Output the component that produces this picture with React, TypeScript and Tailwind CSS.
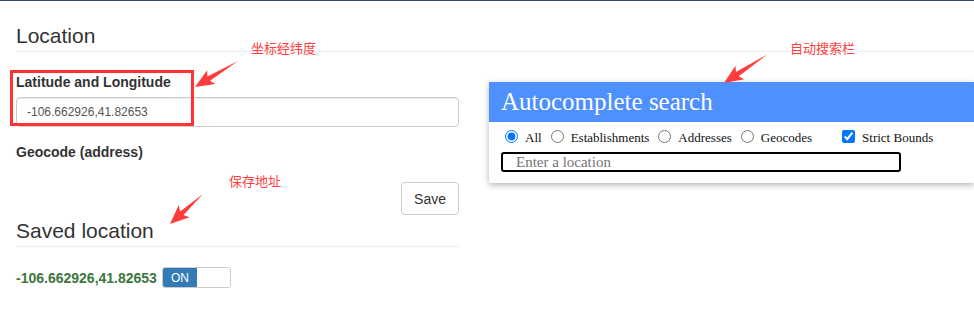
import React from 'react';

const arrowPoints = (tx: number, ty: number, px: number, py: number) => {
  const dx = px - tx;
  const dy = py - ty;
  const len = Math.hypot(dx, dy);
  const ux = dx / len;
  const uy = dy / len;
  const nx = -uy;
  const ny = ux;
  const pt = (a: number, w: number) => `${tx + ux * a + nx * w},${ty + uy * a + ny * w}`;
  const h = len - 16;
  return [pt(0, 0), pt(h, 2.5), pt(h - 3, 8), pt(len, 0), pt(h - 3, -8), pt(h, -2.5)].join(' ');
};

function Annotations() {
  return (
    <>
      <div className="pointer-events-none absolute left-[10px] top-[70px] h-[56px] w-[184px] border-[3px] border-[#ff3333]" />
      <svg className="pointer-events-none absolute left-0 top-0" width={974} height={333}>
        <polygon points={arrowPoints(238, 61, 195, 87)} fill="#ff3b3b" />
        <polygon points={arrowPoints(203, 194, 170, 224)} fill="#ff3b3b" />
        <polygon points={arrowPoints(768, 54, 724, 83)} fill="#ff3b3b" />
      </svg>
      <span className="absolute left-[251px] top-[41px] font-['Noto_Sans_CJK_SC',sans-serif] text-[13px] leading-[13px] text-[#ff4040]">
        坐标经纬度
      </span>
      <span className="absolute left-[229px] top-[174px] font-['Noto_Sans_CJK_SC',sans-serif] text-[13px] leading-[13px] text-[#ff4040]">
        保存地址
      </span>
      <span className="absolute left-[790px] top-[41px] font-['Noto_Sans_CJK_SC',sans-serif] text-[13px] leading-[13px] text-[#ff4040]">
        自动搜索栏
      </span>
    </>
  );
}

function LocationForm() {
  return (
    <div className="w-[443px] shrink-0 pt-[20px]">
      <label className="mb-[5px] block text-sm font-bold leading-5 text-[#333]">Latitude and Longitude</label>
      <input
        readOnly
        defaultValue="-106.662926,41.82653"
        className="block h-[30px] w-full rounded-[4px] border border-[#ccc] px-[10px] text-xs text-[#555] shadow-[inset_0_1px_1px_rgba(0,0,0,0.075)] outline-none"
      />
      <label className="mt-[15px] block text-sm font-bold leading-5 text-[#333]">Geocode (address)</label>
      <div className="mt-[20px] flex justify-end">
        <button className="h-[33px] rounded-[4px] border border-[#ccc] bg-white px-3 text-sm text-[#333]">Save</button>
      </div>
      <h3 className="mt-[4px] border-b border-[#eee] pb-[4px] text-[21px] leading-[23px] text-[#333]">Saved location</h3>
      <div className="mt-[20px] flex items-center gap-[5px]">
        <span className="text-sm font-bold text-[#3c763d]">-106.662926,41.82653</span>
        <div className="flex h-[21px] w-[69px] overflow-hidden rounded-[3px] border border-[#ccc]">
          <span className="flex w-[34px] items-center justify-center bg-[#337ab7] text-xs text-white">ON</span>
          <span className="flex-1 bg-white" />
        </div>
      </div>
    </div>
  );
}

function AutocompleteCard() {
  const radios = ['All', 'Establishments', 'Addresses', 'Geocodes'];
  return (
    <div className="rounded-l-[2px] bg-white pb-[11px] font-['Liberation_Serif',serif] shadow-[0_2px_6px_rgba(0,0,0,0.3)]">
      <div className="h-[40px] bg-[#4d90fe] px-3 text-[25px] leading-[40px] text-white">Autocomplete search</div>
      <div className="mt-[6px] flex h-[16px] items-center pl-[16px] text-[13px] text-[#111]">
        {radios.map((r, i) => (
          <label key={r} className="flex items-center">
            <input type="radio" name="type" defaultChecked={i === 0} className="m-0 mr-[7px] h-[13px] w-[13px]" />
            <span className="mr-[9px] pt-[4px]">{r}</span>
          </label>
        ))}
        <label className="ml-[21px] flex items-center">
          <input type="checkbox" defaultChecked className="m-0 mr-[7px] h-[13px] w-[13px]" />
          <span className="pt-[4px]">Strict Bounds</span>
        </label>
      </div>
      <input
        placeholder="Enter a location"
        className="ml-[12px] mt-[8px] block h-[20px] w-[400px] rounded-[3px] border-2 border-black pl-[13px] pr-[11px] text-[15px] leading-[16px] outline-none placeholder:text-[#757575]"
      />
    </div>
  );
}

export default function App() {
  return (
    <div className="relative h-[333px] w-[974px] overflow-hidden bg-white font-['Liberation_Sans',Arial,sans-serif]">
      <div className="h-px bg-[#2c4a6b]" />
      <div className="px-4 pt-[23px]">
        <h3 className="-mr-4 border-b border-[#eee] pb-[4px] text-[21px] leading-[23px] text-[#333]">Location</h3>
        <div className="flex gap-[30px]">
          <LocationForm />
          <div className="-mr-4 flex-1 pt-[30px]">
            <AutocompleteCard />
          </div>
        </div>
      </div>
      <Annotations />
    </div>
  );
}
